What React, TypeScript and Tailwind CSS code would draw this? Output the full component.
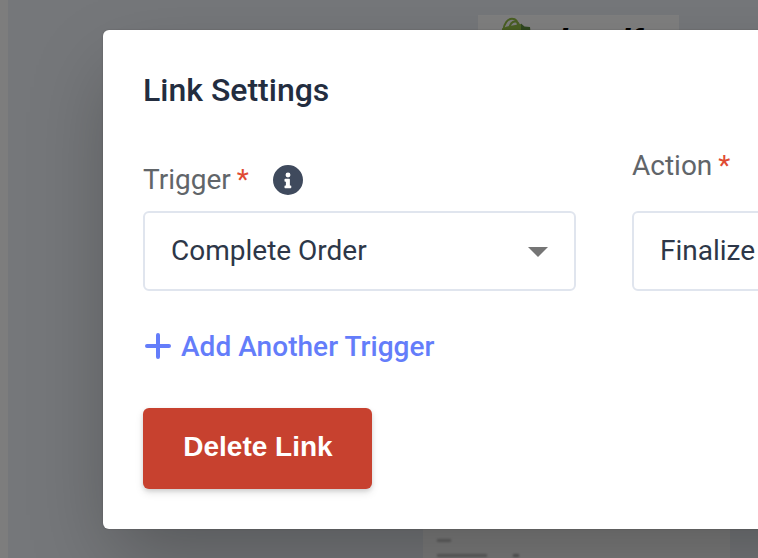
import React from "react";

const sans = "font-[Roboto,'Liberation_Sans',sans-serif]";

function ShopifyCard() {
  return (
    <div className="absolute left-[478px] top-[15px] h-[70px] w-[201px] overflow-hidden bg-white">
      <svg className="absolute left-0 top-0" width="201" height="70" viewBox="0 0 201 70">
        <path d="M24 13.500 29 11.500 43 9 45 50 22 50Z" fill="#95bf47" />
        <path d="M43 8.500 46.500 11.500 52 12 56 50 43 50Z" fill="#5e8e3e" />
        <path d="M25 16C26 8 30 3.700 34 3.700 38 3.700 40 7 40 12M31 14C32 9 34.500 6.500 37 6.500 40 6.500 41 9 41.500 12" fill="none" stroke="#95bf47" strokeWidth="2" />
      </svg>
      <span className="absolute left-[61px] top-[6px] font-['Liberation_Sans',sans-serif] text-[36px] font-bold italic leading-[44px] tracking-[-1.2px] text-black">
        shopify
      </span>
    </div>
  );
}

function DetailsCard() {
  return (
    <div className="absolute left-[423px] top-[500px] h-[90px] w-[307px] overflow-hidden bg-[#fafafa]">
      <div className="absolute left-[14px] top-[39px] h-[3px] w-[14px] bg-[#c2c2c2] blur-[1px]" />
      <div className="absolute left-[14px] top-[54px] h-[3px] w-[50px] bg-[#bcbcbc] blur-[1px]" />
      <div className="absolute left-[90px] top-[54px] h-[3px] w-[6px] bg-[#aaa] blur-[1px]" />
    </div>
  );
}

function Label({ children }: { children: React.ReactNode }) {
  return (
    <span className="whitespace-nowrap text-[28px] leading-8 text-[#616569]">
      {children} <span className="-ml-[1px] text-[#e04b33]">*</span>
    </span>
  );
}

function Select({ value }: { value: string }) {
  return (
    <div className="flex h-20 w-[433px] items-center justify-between rounded-[6px] border-2 border-[#e0e5ee] pl-[26px] pr-[26px] text-[28px] text-[#2d3748]">
      <span className="whitespace-nowrap leading-8">{value}</span>
      <svg className="mt-[2px]" width="20" height="10" viewBox="0 0 20 10">
        <path d="M0 0H20L10 10Z" fill="#757575" />
      </svg>
    </div>
  );
}

export default function App() {
  return (
    <div className={`relative h-[558px] w-[758px] overflow-hidden bg-[#ebeef4] ${sans}`}>
      <div className="h-full w-2 bg-[#fafbfb]" />
      <ShopifyCard />
      <DetailsCard />
      <div className="absolute inset-0 bg-black/50" />
      <main className="absolute left-[103px] top-[30px] flex h-[499px] w-[1000px] flex-col rounded-[6px] bg-white px-10 pt-10 shadow-[0_34px_76px_-10px_rgba(0,0,0,0.27),0_0_2px_rgba(0,0,0,0.2)]">
        <h1 className="h-10 text-[32px] font-medium leading-10 text-[#232d3f]">Link Settings</h1>
        <div className="mt-[38px] flex gap-14">
          <div>
            <div className="flex h-[63px] items-center gap-6 pt-[1px]">
              <Label>Trigger</Label>
              <svg width="30" height="30" viewBox="0 0 512 512">
                <path d="M256 0a256 256 0 1 0 0 512 256 256 0 0 0 0-512Zm0 130a42 42 0 1 1 0 84 42 42 0 0 1 0-84Zm56 254a12 12 0 0 1-12 12h-92a12 12 0 0 1-12-12v-24a12 12 0 0 1 12-12h12v-64h-12a12 12 0 0 1-12-12v-24a12 12 0 0 1 12-12h68a12 12 0 0 1 12 12v100h12a12 12 0 0 1 12 12Z" fill="#3f4a5d" />
              </svg>
            </div>
            <Select value="Complete Order" />
          </div>
          <div>
            <div className="flex h-[63px] items-start pt-[2px]">
              <Label>Action</Label>
            </div>
            <Select value="Finalize" />
          </div>
        </div>
        <button className="mt-9 flex h-10 items-center gap-[10px] self-start text-[28px] font-medium tracking-[0.04px] text-[#647dfa]">
          <svg className="mb-[2px] ml-[2px]" width="26" height="26" viewBox="0 0 26 26">
            <path d="M13 2V24M2 13H24" stroke="currentColor" strokeWidth="4" strokeLinecap="round" />
          </svg>
          Add Another Trigger
        </button>
        <button className="mt-[41px] flex h-[81px] w-[229px] items-center justify-center rounded-[6px] bg-[#c7412f] pb-[3px] pl-[1px] font-['Liberation_Sans',sans-serif] text-[28px] font-bold text-white shadow-[0_2px_4px_rgba(0,0,0,0.12),0_4px_8px_rgba(0,0,0,0.1)]">
          Delete Link
        </button>
      </main>
    </div>
  );
}
